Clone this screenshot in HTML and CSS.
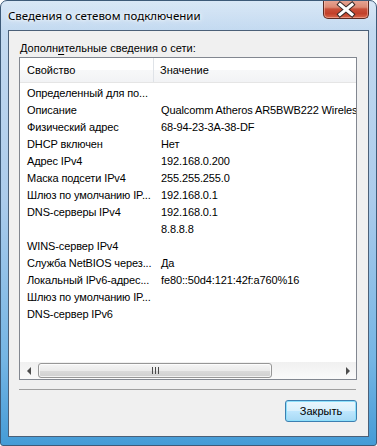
FILE: index.html
```html
<!DOCTYPE html>
<html lang="ru">
<head>
<meta charset="utf-8">
<link rel="stylesheet" href="styles.css">
</head>
<body>
<div class="window">
  <div class="titlebar">
    <span class="title">Сведения о сетевом подключении</span>
    <div class="close">
      <svg width="46" height="19" viewBox="0 0 46 19">
        <path d="M17 4.5 L29 14.5 M29 4.5 L17 14.5" stroke="#3b2a28" stroke-width="5" stroke-linecap="square"/>
        <path d="M17 4.5 L29 14.5 M29 4.5 L17 14.5" stroke="#ffffff" stroke-width="3" stroke-linecap="square"/>
      </svg>
    </div>
  </div>
  <div class="client">
    <div class="label">Дополн<u>и</u>тельные сведения о сети:</div>
    <div class="listview">
      <div class="header">
        <div class="hcol c1">Свойство</div>
        <div class="hcol c2">Значение</div>
      </div>
      <div class="rows">
        <div class="row"><span class="c1">Определенный для по...</span><span class="c2"></span></div>
        <div class="row"><span class="c1">Описание</span><span class="c2">Qualcomm Atheros AR5BWB222 Wireless</span></div>
        <div class="row"><span class="c1">Физический адрес</span><span class="c2">68-94-23-3A-38-DF</span></div>
        <div class="row"><span class="c1">DHCP включен</span><span class="c2">Нет</span></div>
        <div class="row"><span class="c1">Адрес IPv4</span><span class="c2">192.168.0.200</span></div>
        <div class="row"><span class="c1">Маска подсети IPv4</span><span class="c2">255.255.255.0</span></div>
        <div class="row"><span class="c1">Шлюз по умолчанию IP...</span><span class="c2">192.168.0.1</span></div>
        <div class="row"><span class="c1">DNS-серверы IPv4</span><span class="c2">192.168.0.1</span></div>
        <div class="row"><span class="c1"></span><span class="c2">8.8.8.8</span></div>
        <div class="row"><span class="c1">WINS-сервер IPv4</span><span class="c2"></span></div>
        <div class="row"><span class="c1">Служба NetBIOS через...</span><span class="c2">Да</span></div>
        <div class="row"><span class="c1">Локальный IPv6-адрес...</span><span class="c2">fe80::50d4:121:42f:a760%16</span></div>
        <div class="row"><span class="c1">Шлюз по умолчанию IP...</span><span class="c2"></span></div>
        <div class="row"><span class="c1">DNS-сервер IPv6</span><span class="c2"></span></div>
      </div>
      <div class="hscroll">
        <div class="sbtn"><span class="arrow-left"></span></div>
        <div class="track">
          <div class="thumb"><span class="grip"></span></div>
        </div>
        <div class="sbtn"><span class="arrow-right"></span></div>
      </div>
    </div>
    <div class="sep"></div>
    <div class="buttons">
      <button class="btn">Закрыть</button>
    </div>
  </div>
</div>
</body>
</html>
```

FILE: styles.css
```css
html, body {
  margin: 0;
  padding: 0;
  background: #ffffff;
}

.window {
  width: 377px;
  height: 446px;
  box-sizing: border-box;
  border: 1px solid #3d5a78;
  border-radius: 7px 7px 3px 3px;
  padding: 0 7px 8px 7px;
  display: flex;
  flex-direction: column;
  background:
    linear-gradient(180deg, rgba(255,255,255,0.3) 0px, rgba(255,255,255,0) 29px),
    linear-gradient(180deg, #c8ddf2 0px, #bfd7ef 60px, #abcbeb 200px, #74b5e4 360px, #449bd6 446px);
  overflow: hidden;
}

.titlebar {
  height: 29px;
  display: flex;
  align-items: flex-start;
  flex-shrink: 0;
}

.title {
  font-family: "Noto Sans", "Open Sans", sans-serif;
  font-size: 11.5px;
  line-height: 16px;
  color: #000;
  padding-top: 7px;
  text-shadow: 0 0 6px #ffffff, 0 0 3px #ffffff;
}

.close {
  margin-left: auto;
  margin-right: 0;
  margin-top: -1px;
  width: 46px;
  height: 19px;
  box-sizing: border-box;
  border: 1px solid #5b2a22;
  border-top: none;
  border-radius: 0 0 5px 5px;
  background: linear-gradient(180deg, #e8a797 0%, #dc8a74 40%, #c9503a 50%, #c2402a 75%, #d8664a 100%);
  box-shadow: inset 0 0 0 1px rgba(255,210,200,0.45);
  position: relative;
}

.close svg {
  position: absolute;
  left: -1px;
  top: 0;
}

.client {
  flex: 1;
  border: 1px solid #4b6078;
  background: #f0f0f0;
  padding: 11px 11px 0 10px;
  display: flex;
  flex-direction: column;
  font-family: "Liberation Sans", Arial, sans-serif;
  font-size: 11px;
  color: #000;
}

.label {
  line-height: 13px;
  padding-left: 1px;
  margin-bottom: 2px;
  white-space: nowrap;
}

.label u {
  text-underline-offset: 2px;
}

.listview {
  height: 323px;
  box-sizing: border-box;
  border: 1px solid #828790;
  background: #ffffff;
  display: flex;
  flex-direction: column;
  overflow: hidden;
}

.header {
  height: 25px;
  flex-shrink: 0;
  display: flex;
  box-sizing: border-box;
  border-bottom: 1px solid #e5e5e5;
  background: linear-gradient(180deg, #ffffff 0%, #ffffff 50%, #f7f8f9 51%, #f2f3f5 100%);
}

.hcol {
  line-height: 24px;
  white-space: nowrap;
}

.hcol.c1 {
  width: 134px;
  padding-left: 7px;
  box-sizing: border-box;
  border-right: 1px solid #dfe3e8;
}

.hcol.c2 {
  padding-left: 6px;
}

.rows {
  flex: 1;
  padding-top: 2px;
  overflow: hidden;
}

.row {
  display: flex;
  height: 17px;
  line-height: 17px;
  white-space: nowrap;
  letter-spacing: -0.12px;
}

.row .c1 {
  width: 135px;
  flex-shrink: 0;
  padding-left: 7px;
  box-sizing: border-box;
  overflow: hidden;
}

.row .c2 {
  padding-left: 6px;
}

.hscroll {
  height: 17px;
  flex-shrink: 0;
  display: flex;
  background: linear-gradient(180deg, #f0f0f0 0%, #fafafa 100%);
}

.sbtn {
  width: 17px;
  height: 17px;
  display: flex;
  align-items: center;
  justify-content: center;
  flex-shrink: 0;
}

.arrow-left {
  width: 0;
  height: 0;
  border-top: 4px solid transparent;
  border-bottom: 4px solid transparent;
  border-right: 4px solid #4d4d4d;
}

.arrow-right {
  width: 0;
  height: 0;
  border-top: 4px solid transparent;
  border-bottom: 4px solid transparent;
  border-left: 4px solid #4d4d4d;
}

.track {
  flex: 1;
  padding: 1px 0;
  display: flex;
}

.thumb {
  width: 234px;
  margin-left: 1px;
  box-sizing: border-box;
  border: 1px solid #979797;
  border-radius: 3px;
  background: linear-gradient(180deg, #f5f5f5 0%, #ebebeb 50%, #dbdbdb 51%, #cfcfcf 100%);
  box-shadow: inset 0 0 0 1px rgba(255,255,255,0.7);
  display: flex;
  align-items: center;
  justify-content: center;
}

.grip {
  width: 7px;
  height: 7px;
  background: repeating-linear-gradient(90deg, #4a4a4a 0px, #4a4a4a 1px, transparent 1px, transparent 3px);
}

.sep {
  height: 1px;
  background: #a0a0a0;
  margin-top: 9px;
  width: 337px;
}

.buttons {
  display: flex;
  justify-content: flex-end;
  margin-top: 10px;
}

.btn {
  width: 72px;
  height: 22px;
  margin: 0;
  padding: 0;
  box-sizing: border-box;
  font-family: "Liberation Sans", Arial, sans-serif;
  font-size: 11px;
  color: #000;
  border: 1px solid #3c7fb1;
  border-radius: 3px;
  background: linear-gradient(180deg, #eaf6fd 0%, #d9f0fc 48%, #bee6fd 52%, #a7d9f5 100%);
  box-shadow: inset 0 0 0 1px #8ee0fb;
}
```
